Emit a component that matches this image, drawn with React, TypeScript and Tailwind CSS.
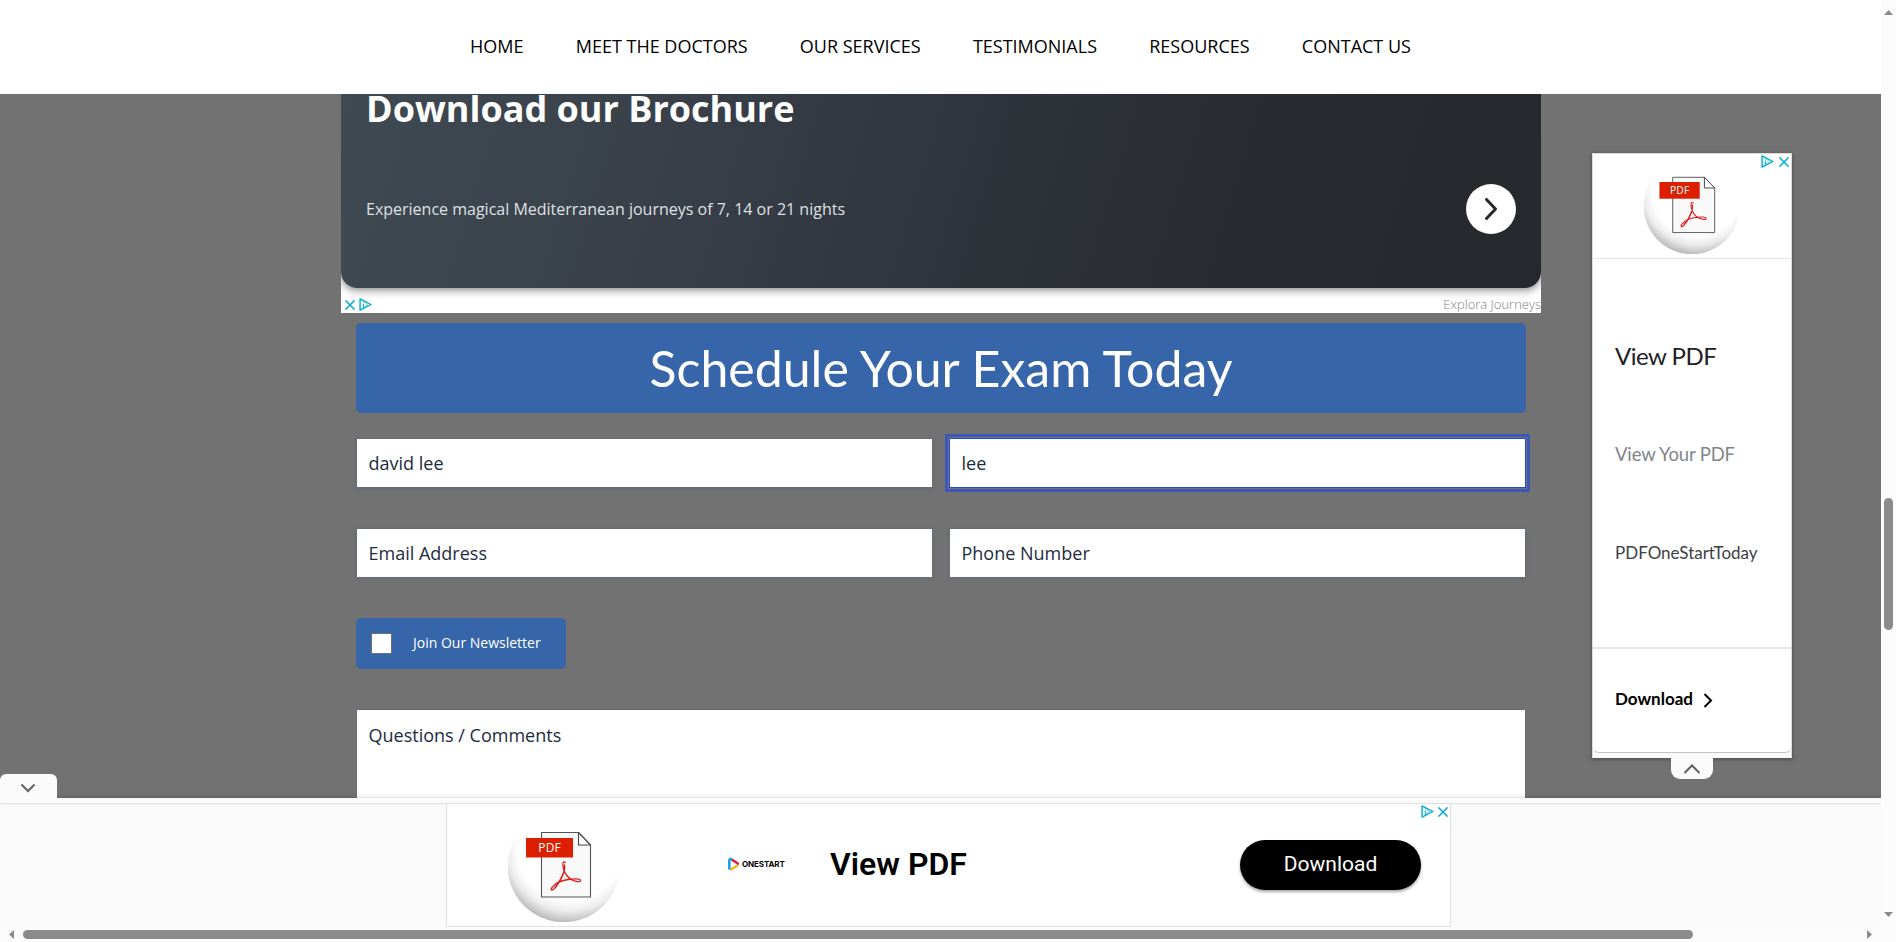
import React from "react";

const OPEN = "font-['Open_Sans',sans-serif]";
const LATO = "font-['Lato',sans-serif]";
const ROBOTO = "font-['Roboto',sans-serif]";

const navItems = ["HOME", "MEET THE DOCTORS", "OUR SERVICES", "TESTIMONIALS", "RESOURCES", "CONTACT US"];

function AdChoices() {
  return (
    <svg width="13" height="13" viewBox="0 0 12 12" fill="none" stroke="#00aecd">
      <path d="M1 .8 11 6 1 11.2Z" strokeWidth="1.3" strokeLinejoin="round" />
      <path d="M4 5.2v4.800" strokeWidth="1" />
      <path d="M4 3v1" strokeWidth="1" />
      <path d="M4.4 3.6 8.200 6 4.6 8.200" strokeWidth=".5" />
    </svg>
  );
}

function AdClose() {
  return (
    <svg width="10" height="10" viewBox="0 0 10 10" fill="none" stroke="#00aecd" strokeWidth="1.5">
      <path d="m.4.4 9.200 9.200M9.600.4.4 9.600" />
    </svg>
  );
}

function PdfBadge({ size, id }: { size: number; id: string }) {
  return (
    <svg width={size} height={size} viewBox="0 0 112 112" className="shrink-0">
      <defs>
        <radialGradient id={id} gradientUnits="userSpaceOnUse" cx="62" cy="38" r="75">
          <stop offset="0.7" stopColor="#fff" />
          <stop offset="0.84" stopColor="#ececec" />
          <stop offset="1" stopColor="#bababa" />
        </radialGradient>
      </defs>
      <path d="M30 6.500A56 56 0 1 0 110 70L80 20Z" fill={`url(#${id})`} />
      <path d="M33.500 22.500H70.500L82.500 35V87H33.500Z" fill="#f9f9f9" stroke="#555" strokeWidth="1.100" />
      <path d="M70.500 22.500V35H82.500" fill="#fff" stroke="#444" strokeWidth="1.100" />
      <path d="M70.500 22.500 82.500 35" stroke="#444" strokeWidth="1.100" />
      <rect x="18" y="28" width="47" height="19.500" fill="#dc1f00" />
      <text x="41.500" y="41.500" textAnchor="middle" fontFamily="Open Sans, sans-serif" fontSize="12" fill="#fff" textLength="22.500" lengthAdjust="spacing">PDF</text>
      <g fill="none" stroke="#dc1f1a" strokeLinecap="round">
        <path d="M57.500 52.500C54.500 50.500 54.500 54 55.500 59C56.500 63 60 68 64 70C68 72 72.500 72.300 72.500 70.500C72.500 68.500 66 68.500 60 69.500C54 70.500 49 72.500 46 75.500C43 78 42.500 80 44 80C46 80 49 76 52 70.500C55 65 57.500 58.500 56.500 55" strokeWidth="1.300" />
        <path d="M56 62C54 67 50 74 47 77.500" strokeWidth="1.300" />
      </g>
    </svg>
  );
}

function Field({ text, focused }: { text: string; focused?: boolean }) {
  return (
    <div
      className={
        focused
          ? "relative flex h-[50px] w-[577px] items-center border border-[#2649d8] bg-white px-[11.500px] outline-3 outline-offset-1 outline-[#3d57b8]"
          : "flex h-[50px] w-[577px] items-center border border-[#666c78] bg-white px-[11.500px] shadow-[0_1px_3px_rgba(90,100,120,0.35)]"
      }
    >
      <span className={`${OPEN} text-[18px] leading-6 text-[#1d2c40]`}>{text}</span>
    </div>
  );
}

function TopAd() {
  return (
    <div className="h-[219px] w-[1200px] overflow-hidden bg-white">
      <div className={`${OPEN} h-[194px] rounded-b-[16px] bg-[linear-gradient(107deg,#3f4a53_0%,#39404a_27%,#2f343c_52%,#292c31_70%,#25282d_100%)] shadow-[0_2px_8px_rgba(0,0,0,0.5)]`}>
        <div className="h-[90px] pl-[25px]">
          <h2 className="whitespace-nowrap text-[36px] font-bold leading-[30px] text-white">Download our Brochure</h2>
        </div>
        <div className="flex h-[50px] items-center justify-between pl-[25px] pr-[25px]">
          <p className="whitespace-nowrap text-[16px] leading-6 text-[#dfe1e3]">Experience magical Mediterranean journeys of 7, 14 or 21 nights</p>
          <div className="flex size-[50px] items-center justify-center rounded-full bg-white">
            <svg width="14" height="22" viewBox="0 0 14 22" fill="none" stroke="#25282d" strokeWidth="3" strokeLinecap="round" strokeLinejoin="round">
              <path d="m2.500 1.500 9 9.500-9 9.500" />
            </svg>
          </div>
        </div>
      </div>
      <div className="flex h-[25px] items-center justify-between pl-1 pt-[8px]">
        <div className="flex items-center gap-[4px]"><AdClose /><AdChoices /></div>
        <span className={`${OPEN} pb-[2px] text-[13px] font-light leading-4 text-[#808080]`}>Explora Journeys</span>
      </div>
    </div>
  );
}

function SideAd() {
  return (
    <aside className="mt-[59px] flex w-[200px] flex-col items-center">
      <div className="flex h-[605px] w-[200px] flex-col border border-b-0 border-[#dcdcdc] bg-[#fafafa] shadow-[0_1px_4px_rgba(0,0,0,0.4)]">
        <div className={`${LATO} relative flex h-[599px] flex-col rounded-b-md border-b border-[#c4c4c4] bg-white`}>
          <div className="flex h-[105px] justify-center border-b border-[#e4e4e4] pr-[1px] pt-[4px]">
            <PdfBadge size={96} id="side-shade" />
          </div>
          <div className="absolute right-[2px] top-[1px] flex items-center gap-[5px]"><AdChoices /><AdClose /></div>
          <div className="flex h-[390px] flex-col border-b-2 border-[#e8e8e8] pl-[22px] pt-[83px]">
            <div className="whitespace-nowrap text-[24px] leading-[28px] tracking-[-0.5px] text-[#202124]">View PDF</div>
            <div className="mt-[72px] whitespace-nowrap text-[18.500px] leading-[24px] tracking-[-0.15px] text-[#80868b]">View Your PDF</div>
            <div className="mt-[75px] whitespace-nowrap text-[17px] leading-[24px] text-[#3c4043]">PDFOneStartToday</div>
          </div>
          <div className="flex flex-1 items-center gap-[10px] pb-[3px] pl-[22px]">
            <span className="text-[17px] font-bold leading-6 text-black">Download</span>
            <svg width="10" height="15" viewBox="0 0 10 15" fill="none" stroke="#000" strokeWidth="2" className="mt-[2px]"><path d="m1.500 1 6.500 6.500L1.500 14" /></svg>
          </div>
        </div>
      </div>
      <div className="relative flex h-[21px] w-[42px] items-center justify-center rounded-b-[9px] bg-[#fafafa]">
        <svg width="18" height="10" viewBox="0 0 18 10" fill="none" stroke="#616161" strokeWidth="2"><path d="m1.500 9 7.500-7.500L16.500 9" /></svg>
      </div>
    </aside>
  );
}

function BottomAd() {
  return (
    <div className="relative h-[129px] bg-[#fafafa] shadow-[0_0_5px_rgba(0,0,0,0.2)]">
      <div className="absolute -top-[24px] left-0 flex h-[24px] w-[57px] items-center justify-center rounded-t-[6px] bg-[#fafafa] pr-[1px] pt-[4px]">
        <svg width="16" height="10" viewBox="0 0 16 10" fill="none" stroke="#616161" strokeWidth="2"><path d="m1.500 1.500 6.500 6.500 6.500-6.500" /></svg>
      </div>
      <div className="h-[5px] shadow-[0_1px_2px_rgba(0,0,0,0.12)]" />
      <div className={`${ROBOTO} relative ml-[446px] flex h-[124px] w-[1005px] items-center border border-[#e0e0e0] bg-white`}>
        <div className="ml-[61px] mt-[2px]"><PdfBadge size={112} id="bottom-shade" /></div>
        <div className="ml-[107px] flex w-[103px] items-center gap-[2px] pb-[3px]">
          <svg width="13" height="14" viewBox="0 0 13 14" fill="none" strokeWidth="2.600" strokeLinecap="round">
            <path d="M4 12.300 10.500 8.500" stroke="#fbb81c" />
            <path d="M4 2 10.800 6.500" stroke="#d81e4e" />
            <path d="M2.300 11.500V4Q2.300 2 4 2" stroke="#1ba0e1" />
          </svg>
          <span className="font-['Inter',sans-serif] text-[8px] font-bold leading-3 tracking-[-0.1px] text-black">ONESTART</span>
        </div>
        <div className="whitespace-nowrap pb-[3px] text-[32px] font-semibold leading-10 text-black">View PDF</div>
        <div className="ml-auto mr-[29px] flex h-[50px] w-[181px] items-center justify-center rounded-full bg-black text-[21px] text-white shadow-[0_2px_3px_rgba(0,0,0,0.35)]">Download</div>
        <div className="absolute right-[2px] top-[1px] flex items-center gap-[4px]"><AdChoices /><AdClose /></div>
      </div>
    </div>
  );
}

export default function App() {
  return (
    <div className="grid h-[942px] w-[1896px] grid-cols-[1881px_15px] grid-rows-[927px_15px] overflow-hidden bg-[#fcfcfc]">
      <div className="flex flex-col overflow-hidden bg-[#727272]">
        <nav className={`${OPEN} flex h-[94px] shrink-0 items-center justify-center gap-[52.200px] bg-white text-[18px] text-black`}>
          {navItems.map((item) => (
            <a key={item} className="whitespace-nowrap pb-[2px]">{item}</a>
          ))}
        </nav>
        <main className="flex h-[704px] shrink-0 gap-[51px] overflow-hidden pl-[341px]">
          <div className="w-[1200px] shrink-0">
            <TopAd />
            <div className="ml-[15px] mt-[10px] w-[1170px]">
              <h1 className={`${LATO} flex h-[90px] items-center justify-center rounded-[5px] bg-[#3765aa] text-[50px] leading-none text-white`}>Schedule Your Exam Today</h1>
              <div className="mt-[25px] grid grid-cols-2 justify-between gap-x-4 gap-y-[40px]">
                <Field text="david lee" />
                <Field text="lee" focused />
                <Field text="Email Address" />
                <Field text="Phone Number" />
              </div>
              <div className={`${OPEN} mt-[40px] flex h-[51px] w-[210px] items-center gap-[21px] rounded-[5px] bg-[#3765aa] pl-[15px] text-[14px] text-white`}>
                <span className="size-[21px] border border-[#6b7078] bg-white" />
                <span className="pb-[2px]">Join Our Newsletter</span>
              </div>
              <div className={`${OPEN} mt-[40px] h-[120px] border border-[#666c78] bg-white px-[11.500px] pt-[13px] text-[18px] leading-6 text-[#1d2c40]`}>Questions / Comments</div>
            </div>
          </div>
          <SideAd />
        </main>
        <BottomAd />
      </div>

      <div className="flex flex-col items-center bg-[#fcfcfc]">
        <svg width="9" height="5" viewBox="0 0 9 5" className="mt-[10px]"><path d="M0 5 4.500 0 9 5Z" fill="#8b8b8b" /></svg>
        <div className="mt-[483px] h-[132px] w-[9px] rounded-full bg-[#8b8b8b]" />
        <svg width="9" height="5" viewBox="0 0 9 5" className="mt-auto mb-[10px]"><path d="M0 0H9L4.500 5Z" fill="#8b8b8b" /></svg>
      </div>

      <div className="flex items-center bg-[#fcfcfc]">
        <svg width="5" height="9" viewBox="0 0 5 9" className="ml-[9px]"><path d="M5 0V9L0 4.500Z" fill="#8b8b8b" /></svg>
        <div className="ml-[9px] h-[9px] w-[1670px] rounded-full bg-[#8b8b8b]" />
        <svg width="5" height="9" viewBox="0 0 5 9" className="ml-auto mr-[9px]"><path d="M0 0V9L5 4.500Z" fill="#8b8b8b" /></svg>
      </div>
      <div className="bg-[#fcfcfc]" />
    </div>
  );
}
